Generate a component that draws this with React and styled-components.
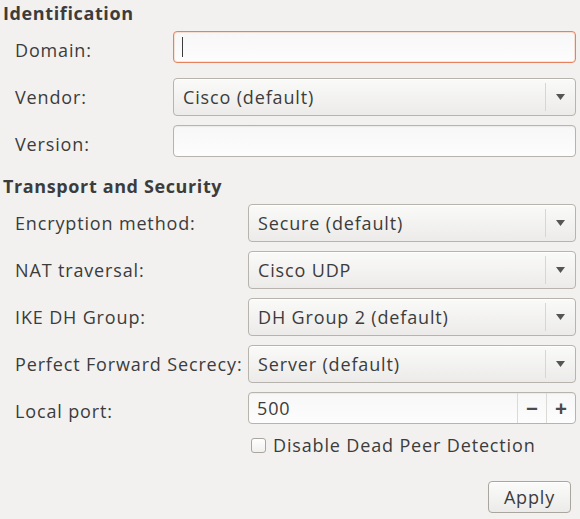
import React from "react";
import styled, { createGlobalStyle } from "styled-components";

const GlobalStyle = createGlobalStyle`
  html, body {
    margin: 0;
    background: #f2f1f0;
  }
  body {
    font-family: "Open Sans", "DejaVu Sans", sans-serif;
    font-size: 18px;
    letter-spacing: 0.85px;
    color: #3c3c3c;
  }
`;

const Page = styled.div`
  width: 580px;
  height: 519px;
  box-sizing: border-box;
  padding: 0 4px 0 3px;
  display: flex;
  flex-direction: column;
`;

const Heading = styled.div`
  font-weight: 700;
  letter-spacing: 0.62px;
  line-height: 24px;
  margin-top: ${props => props.top || 0}px;
  margin-bottom: ${props => props.bottom || 0}px;
`;

const Fields = styled.div`
  display: flex;
  flex-direction: column;
  gap: 9px;
  padding-left: 12px;
`;

const Row = styled.div`
  display: grid;
  grid-template-columns: ${props => props.labelWidth}px 1fr;
  align-items: center;
`;

const Label = styled.span`
  white-space: nowrap;
  margin-top: -1px;
`;

const Entry = styled.div`
  height: 32px;
  box-sizing: border-box;
  margin-bottom: 6px;
  border: 1px solid ${props => props.focused ? "#e8825c" : "#b7b3ad"};
  border-radius: 4px;
  background: linear-gradient(#f7f7f7, #fdfdfd);
  box-shadow: ${props => props.focused ? "inset 0 0 0 1px rgba(240,150,110,0.25)" : "inset 0 1px 1px rgba(0,0,0,0.05)"};
  display: flex;
  align-items: center;
  padding-left: 8px;
`;

const Caret = styled.span`
  width: 1px;
  height: 20px;
  background: #3c3c3c;
`;

const Combo = styled.div`
  height: 38px;
  box-sizing: border-box;
  border: 1px solid #b7b3ad;
  border-radius: 4px;
  background: linear-gradient(#fafaf9, #ecebe9);
  box-shadow: inset 0 1px 0 #ffffff;
  display: flex;
  align-items: center;
`;

const ComboText = styled.span`
  flex: 1;
  padding-left: 9px;
  white-space: nowrap;
`;

const ComboArrow = styled.span`
  width: 29px;
  height: 28px;
  border-left: 1px solid #d9d6d2;
  display: flex;
  align-items: center;
  justify-content: center;
`;

const Spin = styled(Entry)`
  padding-left: 0;
`;

const SpinValue = styled.span`
  flex: 1;
  padding-left: 8px;
`;

const SpinButton = styled.span`
  width: 28px;
  align-self: stretch;
  border-left: 1px solid #dcdad6;
  display: flex;
  align-items: center;
  justify-content: center;
  font-size: 21px;
  font-weight: 700;
  letter-spacing: 0;
  color: #4a4a4a;
`;

const CheckRow = styled.label`
  display: flex;
  align-items: center;
  gap: 7px;
  margin-left: 236px;
  margin-top: -6px;
`;

const Box = styled.span`
  width: 15px;
  height: 15px;
  box-sizing: border-box;
  border: 1px solid #aaa69f;
  border-radius: 3px;
  background: linear-gradient(#ffffff, #f1f0ef);
`;

const Actions = styled.div`
  display: flex;
  justify-content: flex-end;
  padding-right: 5px;
  margin-top: 24px;
`;

const Button = styled.button`
  height: 32px;
  width: 83px;
  font: inherit;
  letter-spacing: inherit;
  color: #3c3c3c;
  border: 1px solid #aaa69f;
  border-radius: 4px;
  background: linear-gradient(#fbfbfa, #ecebe9);
  box-shadow: inset 0 1px 0 #ffffff;
  padding: 0;
`;

function Arrow() {
  return (
    <svg width="9" height="6" viewBox="0 0 9 6">
      <path d="M0 0 H9 L4.5 6 Z" fill="#555" />
    </svg>
  );
}

function Select({ value }) {
  return (
    <Combo>
      <ComboText>{value}</ComboText>
      <ComboArrow>
        <Arrow />
      </ComboArrow>
    </Combo>
  );
}

const transport = [
  ["Encryption method:", "Secure (default)"],
  ["NAT traversal:", "Cisco UDP"],
  ["IKE DH Group:", "DH Group 2 (default)"],
  ["Perfect Forward Secrecy:", "Server (default)"],
];

export default function App() {
  return (
    <Page>
      <GlobalStyle />
      <Heading top={1} bottom={6}>Identification</Heading>
      <Fields>
        <Row labelWidth={158}>
          <Label>Domain:</Label>
          <Entry focused>
            <Caret />
          </Entry>
        </Row>
        <Row labelWidth={158}>
          <Label>Vendor:</Label>
          <Select value="Cisco (default)" />
        </Row>
        <Row labelWidth={158}>
          <Label>Version:</Label>
          <Entry />
        </Row>
      </Fields>
      <Heading top={11} bottom={6}>Transport and Security</Heading>
      <Fields>
        {transport.map(([label, value]) => (
          <Row key={label} labelWidth={233}>
            <Label>{label}</Label>
            <Select value={value} />
          </Row>
        ))}
        <Row labelWidth={233}>
          <Label>Local port:</Label>
          <Spin>
            <SpinValue>500</SpinValue>
            <SpinButton>−</SpinButton>
            <SpinButton>+</SpinButton>
          </Spin>
        </Row>
        <CheckRow>
          <Box />
          Disable Dead Peer Detection
        </CheckRow>
      </Fields>
      <Actions>
        <Button>Apply</Button>
      </Actions>
    </Page>
  );
}
